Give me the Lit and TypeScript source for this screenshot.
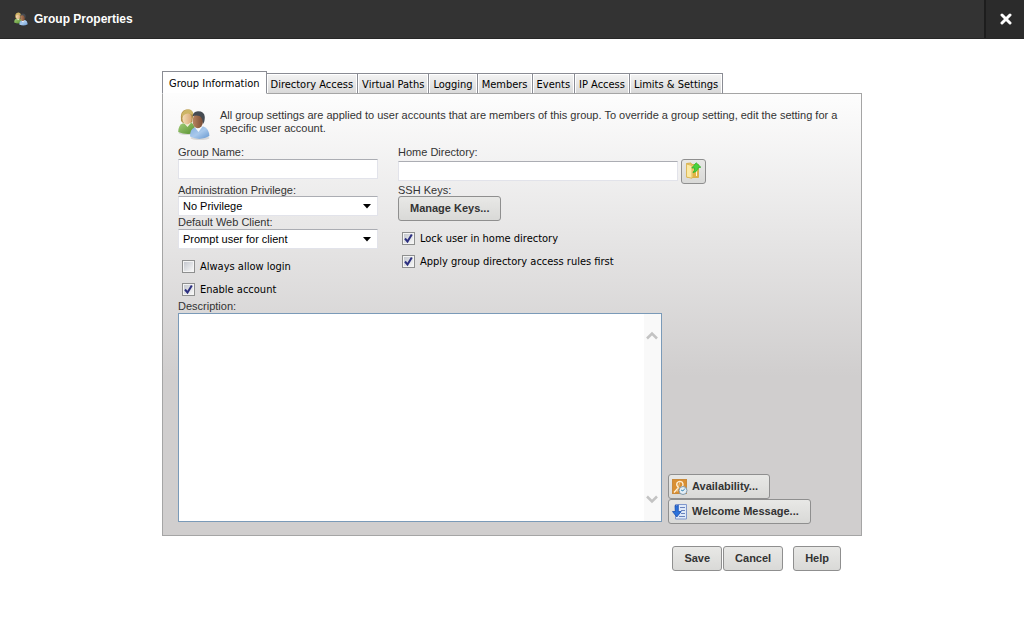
import { LitElement, html, svg, css } from "lit";
import { customElement, state } from "lit/decorators.js";
import { classMap } from "lit/directives/class-map.js";

const usersIcon = (size: number) => html`
  <svg width=${size} height=${size} viewBox="0 0 32 32" aria-hidden="true">
    <defs>
      <linearGradient id="green" x1="0" y1="0" x2="1" y2="1">
        <stop offset="0" stop-color="#a5cf7c" /><stop offset="1" stop-color="#568f2c" />
      </linearGradient>
      <linearGradient id="blue" x1="0" y1="0" x2="1" y2="1">
        <stop offset="0" stop-color="#82aede" /><stop offset=".5" stop-color="#a9c9ec" /><stop offset="1" stop-color="#6596cf" />
      </linearGradient>
      <linearGradient id="tan" x1="0" y1="0" x2="1" y2="0">
        <stop offset="0" stop-color="#f4ddb6" /><stop offset="1" stop-color="#d9a878" />
      </linearGradient>
      <linearGradient id="brown" x1="0" y1="0" x2="1" y2="0">
        <stop offset="0" stop-color="#b98560" /><stop offset="1" stop-color="#7a4c34" />
      </linearGradient>
    </defs>
    <ellipse cx="10" cy="25" rx="9.5" ry="2" fill="#000" opacity=".12" />
    <ellipse cx="22" cy="30" rx="9.5" ry="2" fill="#000" opacity=".12" />
    <path d="M.2 24 Q.4 17 4.500 15.500 L13 14.500 Q17 16 17.500 25 Q8 27.500 .2 24Z" fill="url(#green)" />
    <path d="M6 15 L9.500 19 L13 14.700Z" fill="#f5f2de" />
    <path d="M3 13 Q1.500 3 8 1.600 Q15 .4 15.500 7 L14 14.500 L5 15Z" fill="#b3924a" />
    <ellipse cx="9" cy="10.500" rx="4.600" ry="6" fill="url(#tan)" />
    <path d="M3.500 9 Q3.500 2 10 1.500 Q15 1.500 15.500 7 Q9 4 6 7Z" fill="#cdb566" />
    <path d="M12 28.500 Q12 21 16.500 19.500 L25.500 18.500 Q31 20.500 31.400 28 Q22 33.500 12 28.500Z" fill="url(#blue)" />
    <path d="M16.500 19 L20.500 24 L24.500 18.500Z" fill="#f7fbff" />
    <ellipse cx="19.800" cy="13" rx="5.200" ry="7.300" fill="url(#brown)" />
    <path d="M14.500 8.500 Q14.800 3.600 20 3.200 Q26.500 3.200 26.800 9 Q26.800 14 25 16 Q24.500 9.500 21.500 8 Q17.500 7 14.500 8.500Z" fill="#454b52" />
  </svg>`;

const folderIcon = html`
  <svg width="17" height="17" viewBox="0 0 17 17" aria-hidden="true">
    <path d="M1.500 1.500 L6 1 L6.500 2.500 H13.500 V15.500 H2 Z" fill="#f0ce6a" stroke="#d9b04c" />
    <path d="M1.500 2 L7 3.500 V16.300 L1.500 15Z" fill="#fbe9a4" stroke="#dcb95c" />
    <path d="M8 9 H13 V15 H8Z" fill="#e2b244" />
    <path d="M11.500 8.500 V14" stroke="#fff6cf" />
    <path d="M11.200 .8 L15.800 5.200 L13.300 5.700 Q13 9.500 8 10.500 Q10 8.500 9.600 6 L6.800 6Z" fill="#4ad33c" stroke="#2fae2c" stroke-width=".8" />
  </svg>`;

const availabilityIcon = html`
  <svg width="16" height="16" viewBox="0 0 16 16" aria-hidden="true">
    <rect x=".5" y=".5" width="14" height="14" fill="#d98f33" stroke="#c98a3c" />
    <path d="M2 13.500 L6.500 8.500 Q4 6.500 5 4 Q7 1.500 10 3 Q12.500 6 9 9 L8 9.500" fill="none" stroke="#fff3dc" stroke-width="1.300" />
    <path d="M8 2.500 L5 13" stroke="#f3d3a0" stroke-width=".8" />
    <circle cx="11" cy="11.500" r="4" fill="#e4eef5" stroke="#8299aa" />
    <path d="M10.800 12 L13 9.500 M11 12 L9 11" stroke="#3f8cb9" fill="none" />
  </svg>`;

const messageIcon = html`
  <svg width="16" height="16" viewBox="0 0 16 16" aria-hidden="true">
    <path d="M3.500 .5 H14.500 V15 H3.500Z" fill="#dfe9f8" stroke="#7f97cc" />
    <path d="M8 3.500 H13 M9 6.500 H13 M9 9.500 H13 M7 12.500 H13" stroke="#6a83bd" />
    <path d="M3 1.500 Q5.500 2.500 6.300 1 V7.500 H9.200 L4.800 13 L.5 7.500 H3.300Z" fill="#2b72dc" stroke="#1c4fae" stroke-width=".8" />
  </svg>`;

const chevron = (d: string) => html`
  <svg width="12" height="9" viewBox="0 0 12 9" aria-hidden="true">
    ${svg`<path d=${d} fill="none" stroke="#c3c3c3" stroke-width="2.500" />`}
  </svg>`;

@customElement("app-root")
export class AppRoot extends LitElement {
  @state() private active = 0;

  private tabs = [
    "Group Information", "Directory Access", "Virtual Paths", "Logging",
    "Members", "Events", "IP Access", "Limits & Settings",
  ];

  static styles = css`
    :host {
      display: block;
      min-height: 100vh;
      background: #fff;
      color: #333;
      font: 11px/13px "Liberation Sans", Arial, sans-serif;
    }
    * { box-sizing: border-box; }
    svg { display: block; flex: none; }
    button, input, select, textarea { font: inherit; margin: 0; }
    .bar {
      display: flex;
      align-items: stretch;
      height: 39px;
      background: #333;
      border-bottom: 1px solid #272727;
      color: #fff;
    }
    .title {
      flex: 1;
      display: flex;
      align-items: center;
      gap: 6px;
      margin: 0;
      padding-left: 14px;
      font-size: 12px;
      font-weight: bold;
    }
    .close {
      width: 40px;
      display: grid;
      place-items: center;
      padding: 0 0 0 2px;
      border: 0;
      border-left: 2px solid #1d1d1d;
      background: #2b2b2b;
    }
    .dialog { max-width: 700px; margin: 32px auto 0; }
    .tabs { position: relative; display: flex; align-items: flex-end; margin-bottom: -1px; }
    .tab {
      height: 21px;
      padding: 2px 4px 0;
      border: 1px solid #8a8c94;
      border-left-width: 0;
      border-bottom-color: #a5a5a5;
      background: linear-gradient(#f4f4f4, #d9d9d9);
      box-shadow: inset 1px 1px #fff, inset -1px 0 #fff;
      color: #000;
      white-space: nowrap;
    }
    .tab, .check { font-family: "DejaVu Sans Condensed", Tahoma, sans-serif; font-size: 11px; }
    .tab.active {
      height: 23px;
      padding: 2px 6px 0;
      border-left-width: 1px;
      border-bottom-color: #fdfdfd;
      background: #fff;
    }
    .panel {
      padding: 14px 15px 11px;
      border: 1px solid #a5a5a5;
      background: linear-gradient(#fdfdfd, #d0cece 64%);
    }
    .intro { display: flex; gap: 10px; height: 38px; }
    .intro p { margin: 0; flex: 1; padding-top: 1px; }
    .columns { display: grid; grid-template-columns: 200px 1fr; gap: 20px; }
    .label { display: block; height: 13px; }
    .slot + .label { height: 12px; }
    .field {
      display: block;
      width: 100%;
      height: 20px;
      padding: 0 4px;
      border: 1px solid #e2e3ea;
      border-top-color: #abadb3;
      border-radius: 0;
      background: #fff;
      color: #000;
    }
    .slot { height: 25px; }
    .select { position: relative; }
    .select select { appearance: none; }
    .select svg { position: absolute; right: 7px; top: 8px; pointer-events: none; }
    .directory { display: flex; gap: 3px; }
    .directory .field { width: 280px; margin-top: 2px; }
    .checks { padding: 6px 0 0 4px; margin-bottom: -1px; }
    .check { display: flex; align-items: center; gap: 5px; height: 23px; color: #000; }
    .check input {
      appearance: none;
      width: 13px;
      height: 13px;
      border: 1px solid #8e8f8f;
      background: linear-gradient(135deg, #c5c8cf, #f6f6f6) content-box, #f4f4f4;
      padding: 1px;
    }
    .check span { display: grid; }
    .check span > * { grid-area: 1 / 1; }
    .check svg { pointer-events: none; visibility: hidden; }
    .check input:checked + svg { visibility: visible; }
    .btn {
      display: inline-flex;
      align-items: center;
      justify-content: center;
      gap: 4px;
      height: 25px;
      padding: 0 11px;
      border: 1px solid #8f8f8f;
      border-radius: 3px;
      background: linear-gradient(#e8e8e6, #d9d9d7);
      color: #333;
      font-weight: bold;
      white-space: nowrap;
    }
    .btn.icon { padding: 0 11px 0 3px; }
    .btn.square { width: 25px; padding: 0 0 3px; flex: none; }
    .bottom { display: flex; gap: 6px; align-items: flex-end; }
    .memo { position: relative; flex: 0 1 484px; margin-bottom: 2px; }
    .memo textarea {
      display: block;
      width: 100%;
      height: 209px;
      padding: 2px 20px 2px 4px;
      border: 1px solid #7a9ab8;
      background: #fff;
      color: #000;
      resize: none;
      overflow: hidden;
    }
    .scroll {
      position: absolute;
      inset: 1px 1px 1px auto;
      width: 17px;
      display: flex;
      flex-direction: column;
      align-items: center;
      justify-content: space-between;
      padding: 17px 1px 17px 0;
      background: #f9f9f9;
    }
    .side { display: flex; flex-direction: column; align-items: flex-start; }
    .actions { display: flex; justify-content: flex-end; gap: 1px; padding: 10px 21px 0 0; }
    .actions .help { margin-left: 9px; }
  `;

  private check(text: string, on: boolean) {
    return html`<label class="check">
      <span>
        <input type="checkbox" .checked=${on} />
        <svg width="13" height="13" viewBox="0 0 13 13" aria-hidden="true">
          <path d="M3 6.500 L5.500 9.500 L9.800 2.500" fill="none" stroke="#2c2f80" stroke-width="2" />
        </svg>
      </span>
      ${text}
    </label>`;
  }

  private select(id: string, label: string, options: string[]) {
    return html`<label class="label" for=${id}>${label}</label>
      <div class="select">
        <select class="field" id=${id}>${options.map((o) => html`<option>${o}</option>`)}</select>
        <svg width="8" height="5" viewBox="0 0 8 5" aria-hidden="true"><path d="M0 0 H8 L4 4.500Z" /></svg>
      </div>`;
  }

  render() {
    return html`
      <header class="bar">
        <h1 class="title">${usersIcon(14)} Group Properties</h1>
        <button class="close" aria-label="Close">
          <svg width="12" height="12" viewBox="0 0 12 12" aria-hidden="true">
            <path d="M2 2 L10 10 M10 2 L2 10" stroke="#fff" stroke-width="3" stroke-linecap="round" />
          </svg>
        </button>
      </header>
      <main class="dialog">
        <div class="tabs" role="tablist">
          ${this.tabs.map((t, i) => html`<button
            role="tab"
            aria-selected=${i === this.active ? "true" : "false"}
            class=${classMap({ tab: true, active: i === this.active })}
            @click=${() => (this.active = i)}
          >${t}</button>`)}
        </div>
        <section class="panel">
          <div class="intro">
            ${usersIcon(32)}
            <p>All group settings are applied to user accounts that are members of this group. To override a group setting, edit the setting for a specific user account.</p>
          </div>
          <div class="columns">
            <div>
              <label class="label" for="name">Group Name:</label>
              <div class="slot"><input class="field" id="name" type="text" /></div>
              ${this.select("privilege", "Administration Privilege:", ["No Privilege"])}
              ${this.select("client", "Default Web Client:", ["Prompt user for client"])}
              <div class="checks">
                ${this.check("Always allow login", false)}
                ${this.check("Enable account", true)}
              </div>
            </div>
            <div>
              <label class="label" for="home">Home Directory:</label>
              <div class="slot directory">
                <input class="field" id="home" type="text" />
                <button class="btn square" aria-label="Browse">${folderIcon}</button>
              </div>
              <label class="label" for="keys">SSH Keys:</label>
              <button class="btn" id="keys">Manage Keys...</button>
              <div class="checks">
                ${this.check("Lock user in home directory", true)}
                ${this.check("Apply group directory access rules first", true)}
              </div>
            </div>
          </div>
          <label class="label" for="description">Description:</label>
          <div class="bottom">
            <div class="memo">
              <textarea id="description"></textarea>
              <div class="scroll" aria-hidden="true">
                ${chevron("M1 7.500 L6 2.500 L11 7.500")}
                ${chevron("M1 1.500 L6 6.500 L11 1.500")}
              </div>
            </div>
            <div class="side">
              <button class="btn icon">${availabilityIcon} Availability...</button>
              <button class="btn icon">${messageIcon} Welcome Message...</button>
            </div>
          </div>
        </section>
        <footer class="actions">
          <button class="btn">Save</button>
          <button class="btn">Cancel</button>
          <button class="btn help">Help</button>
        </footer>
      </main>
    `;
  }
}
